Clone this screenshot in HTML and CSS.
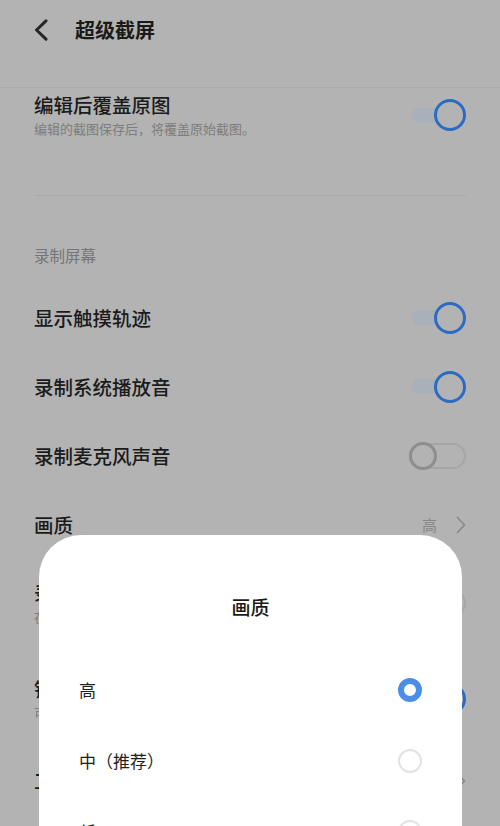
FILE: index.html
```html
<!DOCTYPE html>
<html lang="zh-CN">
<head>
<meta charset="utf-8">
<title>超级截屏</title>
<link rel="stylesheet" href="styles.css">
</head>
<body>
<div class="screen">
  <header class="topbar">
    <span class="back">
      <svg width="14" height="22" viewBox="0 0 14 22"><polyline points="12,1.8 2.5,11 12,20.2" fill="none" stroke="#262626" stroke-width="3" stroke-linecap="round" stroke-linejoin="round"/></svg>
    </span>
    <h1 class="title">超级截屏</h1>
  </header>

  <main class="list">
    <div class="row row-first">
      <div class="text">
        <div class="label">编辑后覆盖原图</div>
        <div class="desc">编辑的截图保存后，将覆盖原始截图。</div>
      </div>
      <span class="switch on"><span class="track"></span><span class="knob"></span></span>
    </div>
    <div class="divider"></div>
    <div class="section">录制屏幕</div>

    <div class="row">
      <div class="label">显示触摸轨迹</div>
      <span class="switch on"><span class="track"></span><span class="knob"></span></span>
    </div>
    <div class="row">
      <div class="label">录制系统播放音</div>
      <span class="switch on"><span class="track"></span><span class="knob"></span></span>
    </div>
    <div class="row">
      <div class="label">录制麦克风声音</div>
      <span class="switch off"><span class="knob"></span></span>
    </div>
    <div class="row">
      <div class="label">画质</div>
      <div class="value">
        <span class="value-text">高</span>
        <svg width="10" height="18" viewBox="0 0 10 18"><polyline points="1.5,1.5 8.5,9 1.5,16.5" fill="none" stroke="#8a8a8a" stroke-width="1.8" stroke-linecap="round" stroke-linejoin="round"/></svg>
      </div>
    </div>
    <div class="row row-two">
      <div class="text">
        <div class="label">录制时显示悬浮球</div>
        <div class="desc">在录制过程中显示控制按钮。</div>
      </div>
      <span class="switch off"><span class="knob"></span></span>
    </div>
    <div class="row row-two">
      <div class="text">
        <div class="label">锁屏后继续录制</div>
        <div class="desc">可在锁屏状态下继续录制屏幕。</div>
      </div>
      <span class="switch on"><span class="track"></span><span class="knob"></span></span>
    </div>
    <div class="row row-last">
      <div class="label">工具栏设置</div>
      <div class="value">
        <svg width="10" height="18" viewBox="0 0 10 18"><polyline points="1.5,1.5 8.5,9 1.5,16.5" fill="none" stroke="#8a8a8a" stroke-width="1.8" stroke-linecap="round" stroke-linejoin="round"/></svg>
      </div>
    </div>
  </main>

  <div class="dialog">
    <div class="dialog-title">画质</div>
    <div class="option">
      <span class="option-label">高</span>
      <span class="radio checked"></span>
    </div>
    <div class="option">
      <span class="option-label">中（推荐）</span>
      <span class="radio"></span>
    </div>
    <div class="option">
      <span class="option-label">低</span>
      <span class="radio"></span>
    </div>
  </div>
</div>
</body>
</html>
```

FILE: styles.css
```css
* { box-sizing: border-box; }

html, body {
  margin: 0;
  padding: 0;
  background: #b3b3b3;
}

body {
  font-family: "Noto Sans CJK SC", "Noto Sans", sans-serif;
  color: #1b1b1b;
}

.screen {
  position: relative;
  width: 500px;
  height: 826px;
  overflow: hidden;
  background: #b3b3b3;
}

/* header */
.topbar {
  height: 88px;
  display: flex;
  align-items: flex-start;
  padding: 17px 0 0 34px;
  border-bottom: 1px solid #ababab;
}

.back {
  display: flex;
  width: 14px;
  height: 26px;
  align-items: center;
  margin-top: 0;
}

.title {
  margin: 0 0 0 27px;
  font-size: 20px;
  line-height: 26px;
  font-weight: 700;
  color: #1a1a1a;
}

/* list */
.list {
  display: flex;
  flex-direction: column;
}

.row {
  height: 69px;
  padding: 0 34px;
  display: flex;
  align-items: center;
  justify-content: space-between;
}

.row-first {
  height: auto;
  padding: 4px 34px 57px;
}

.row-two {
  height: 96px;
  padding: 20px 34px 29px;
}

.row-last {
  height: 60px;
}

.text {
  display: flex;
  flex-direction: column;
}

.label {
  font-size: 19.5px;
  line-height: 26px;
  font-weight: 500;
  color: #1b1b1b;
  white-space: nowrap;
}

.desc {
  font-size: 13px;
  line-height: 18px;
  color: #7d7d7d;
  margin-top: 2px;
  white-space: nowrap;
}

.divider {
  height: 1px;
  margin: 0 34px;
  background: #a9a9a9;
}

.section {
  padding: 49px 34px 18px;
  font-size: 15.5px;
  line-height: 20px;
  color: #767676;
}

.value {
  display: flex;
  align-items: center;
}

.value-text {
  font-size: 15px;
  line-height: 20px;
  color: #858585;
  margin-right: 19px;
}

/* switches */
.switch {
  display: flex;
  align-items: center;
  flex: none;
}

.switch.on {
  width: 54px;
  height: 32px;
}

.switch.on .track {
  width: 38px;
  height: 15px;
  border-radius: 8px;
  background: #a8b0ba;
  flex: none;
}

.switch.on .knob {
  width: 32px;
  height: 32px;
  margin-left: -16px;
  border-radius: 50%;
  border: 3.5px solid #2d6bc3;
  background: #b3b3b3;
  flex: none;
}

.switch.off {
  width: 57px;
  height: 26px;
  border: 2px solid #a6a6a6;
  border-radius: 13px;
}

.switch.off .knob {
  width: 28px;
  height: 28px;
  margin-left: -2px;
  border-radius: 50%;
  border: 3px solid #8e8e8e;
  background: #b3b3b3;
  flex: none;
}

/* dialog */
.dialog {
  position: absolute;
  left: 39px;
  top: 535px;
  width: 423px;
  height: 340px;
  background: #ffffff;
  border-radius: 42px 42px 0 0;
  padding-top: 59px;
}

.dialog-title {
  text-align: center;
  font-size: 19px;
  line-height: 26px;
  font-weight: 500;
  color: #1a1a1a;
  margin-bottom: 34px;
}

.option {
  height: 71px;
  padding: 0 40px;
  display: flex;
  align-items: center;
  justify-content: space-between;
}

.option-label {
  font-size: 17px;
  line-height: 24px;
  color: #1f1f1f;
}

.radio {
  width: 24px;
  height: 24px;
  border-radius: 50%;
  border: 2px solid #e2e2e2;
  flex: none;
}

.radio.checked {
  border: 6px solid #4a8ee9;
}
```
